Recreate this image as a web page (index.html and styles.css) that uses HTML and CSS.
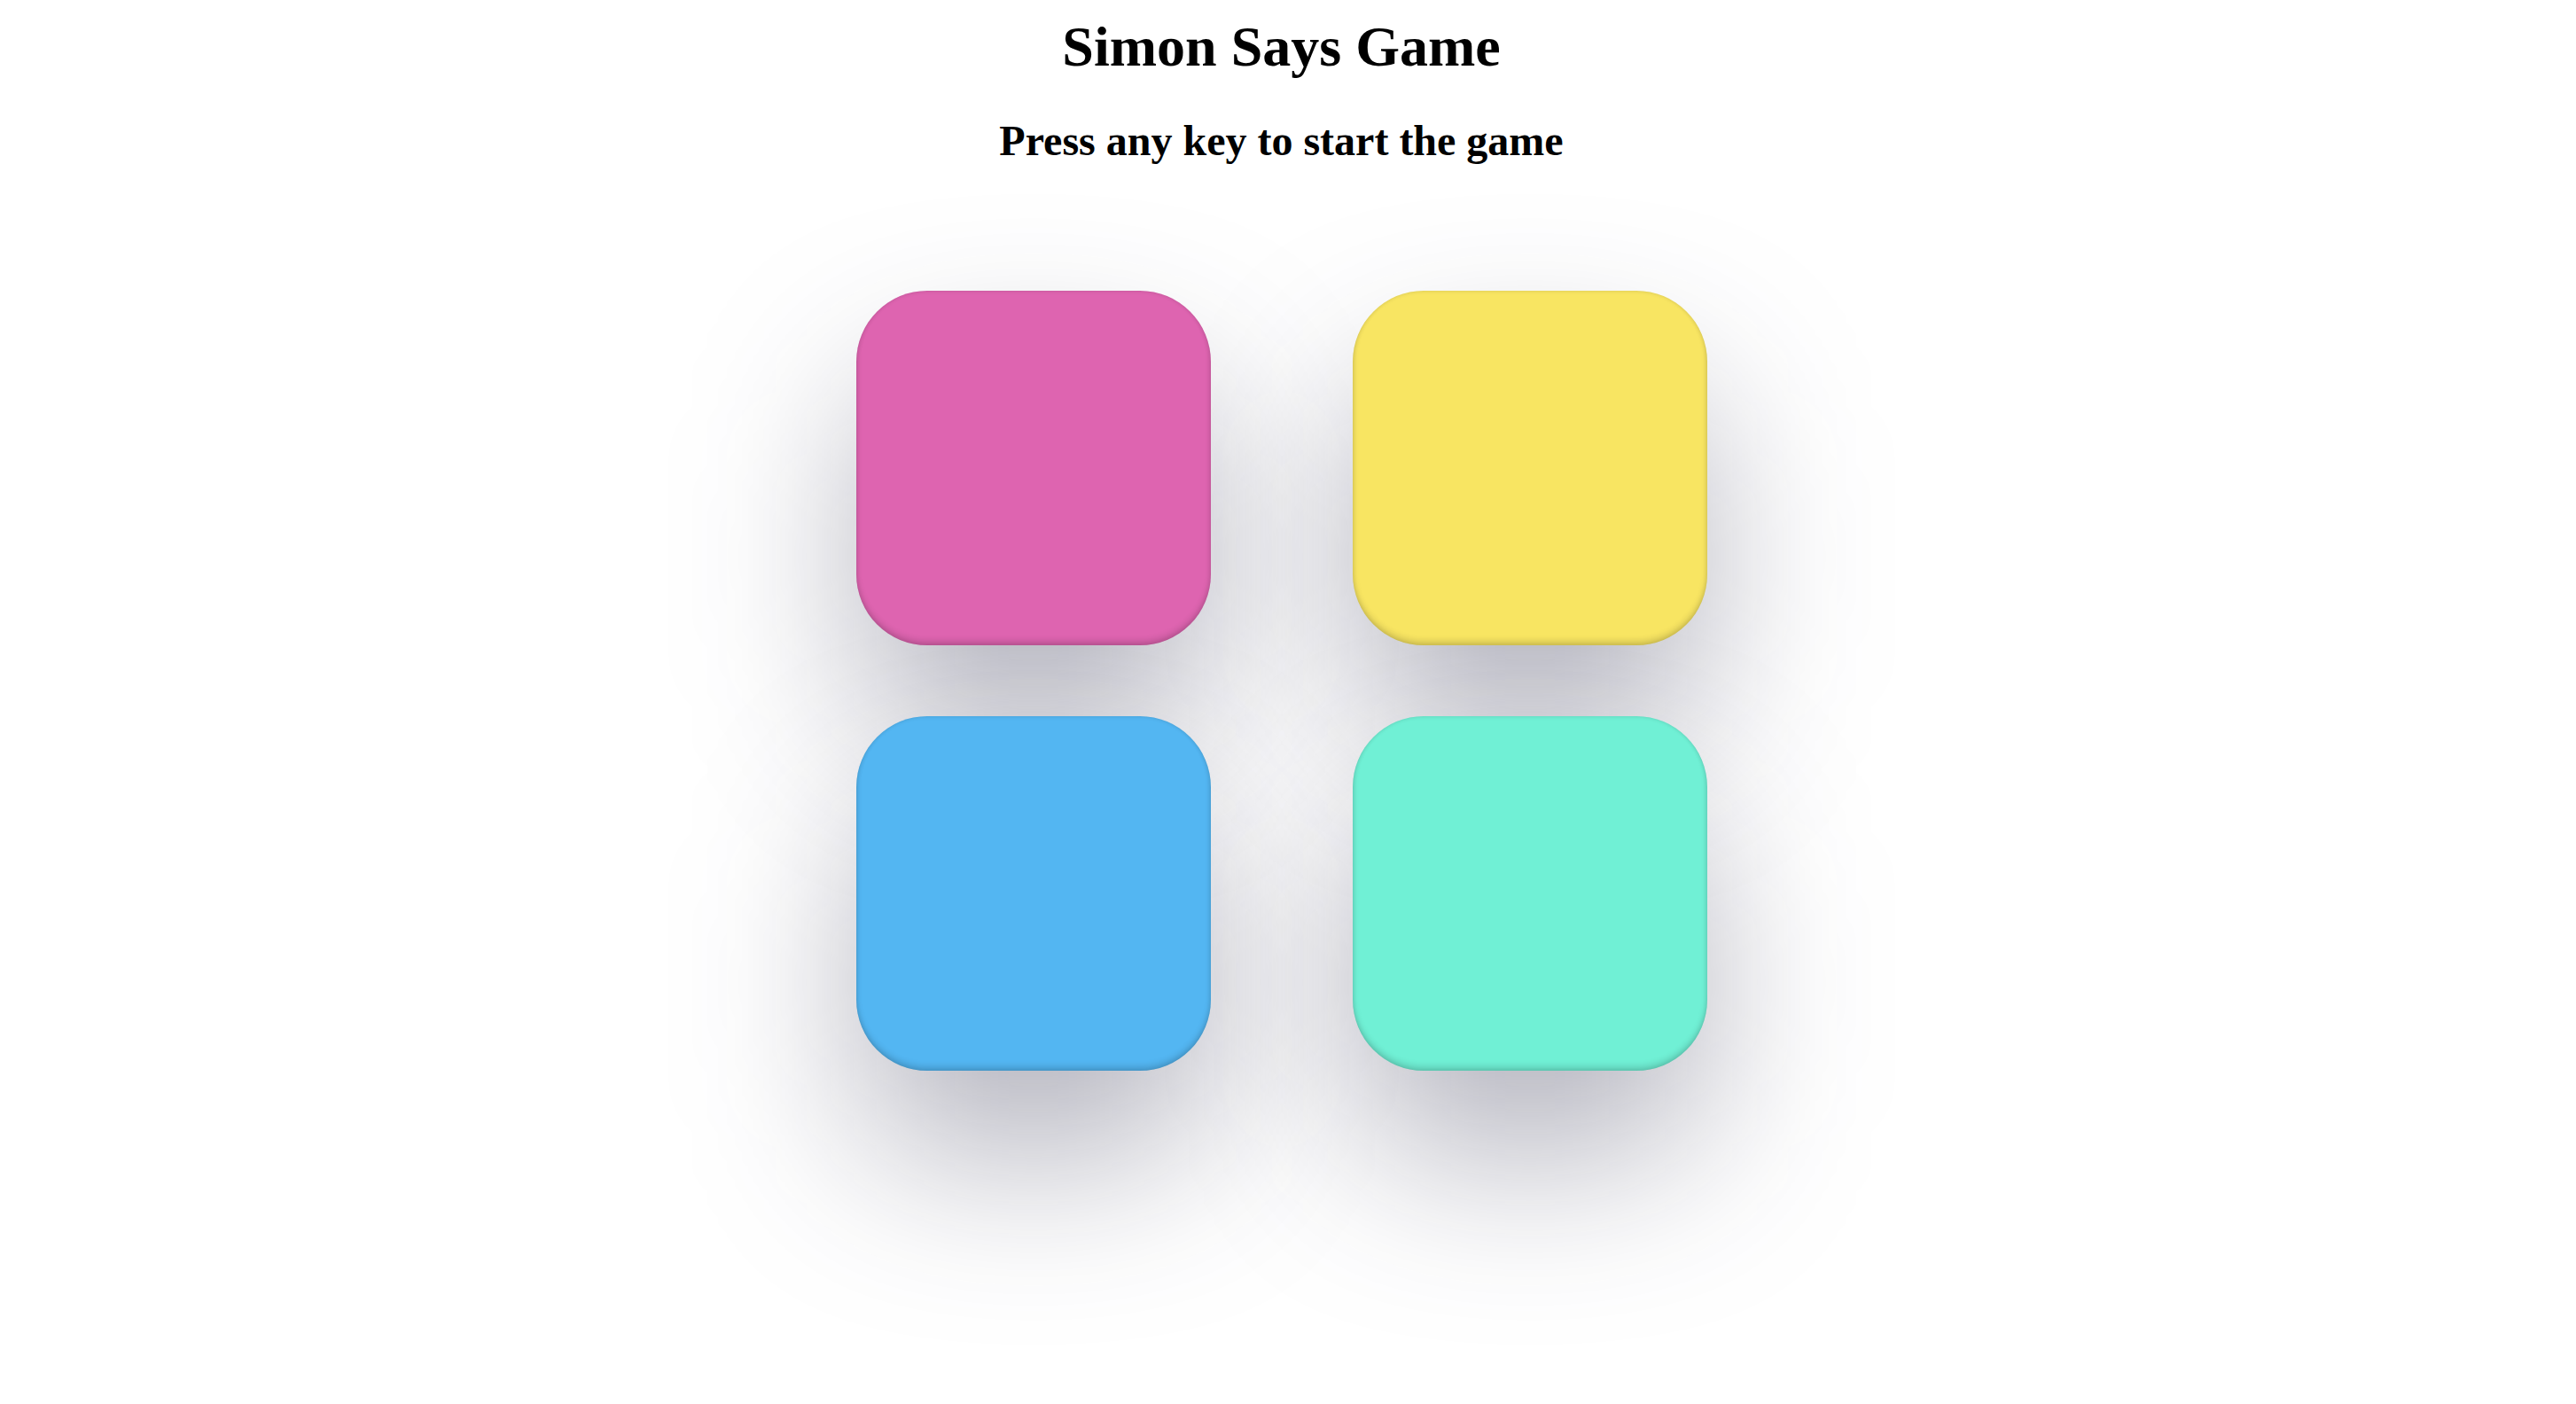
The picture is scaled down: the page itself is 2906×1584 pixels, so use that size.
FILE: index.html
```html
<!DOCTYPE html>
<html lang="en">
<head>
<meta charset="utf-8">
<title>Simon Says Game</title>
<link rel="stylesheet" href="styles.css">
</head>
<body>
<h1 class="title">Simon Says Game</h1>
<h2 class="status">Press any key to start the game</h2>
<div class="board">
  <div class="pad pad-pink"></div>
  <div class="pad pad-yellow"></div>
  <div class="pad pad-blue"></div>
  <div class="pad pad-teal"></div>
</div>
</body>
</html>
```
FILE: styles.css
```css
html {
  background: #ffffff;
  min-height: 100%;
}
body {
  margin: 0;
  padding: 16px 15px 0 0;
  min-height: 1584px;
  box-sizing: border-box;
  font-family: "Liberation Serif", "Times New Roman", serif;
  color: #000;
  text-align: center;
}
.title {
  font-size: 64px;
  font-weight: bold;
  margin: 0 0 41px;
  line-height: normal;
}
.status {
  font-size: 48px;
  font-weight: bold;
  margin: 0;
  line-height: normal;
}
.board {
  display: grid;
  grid-template-columns: 400px 400px;
  grid-auto-rows: 400px;
  column-gap: 160px;
  row-gap: 80px;
  justify-content: center;
  margin-top: 142px;
}
.pad {
  position: relative;
  border-radius: 80px;
  box-shadow:
    inset 0 -5px 7px rgba(0, 0, 0, 0.14),
    inset 0 0 5px rgba(0, 0, 0, 0.12);
}
.pad::before {
  content: "";
  position: absolute;
  left: 10px;
  right: 10px;
  top: 110px;
  bottom: -90px;
  border-radius: 80px;
  background: rgba(30, 30, 60, 0.35);
  filter: blur(100px);
  z-index: -1;
}
.pad-pink { background: #de64b0; }
.pad-yellow { background: #f8e562; }
.pad-blue { background: #53b6f2; }
.pad-teal { background: #70f0d5; }
```
